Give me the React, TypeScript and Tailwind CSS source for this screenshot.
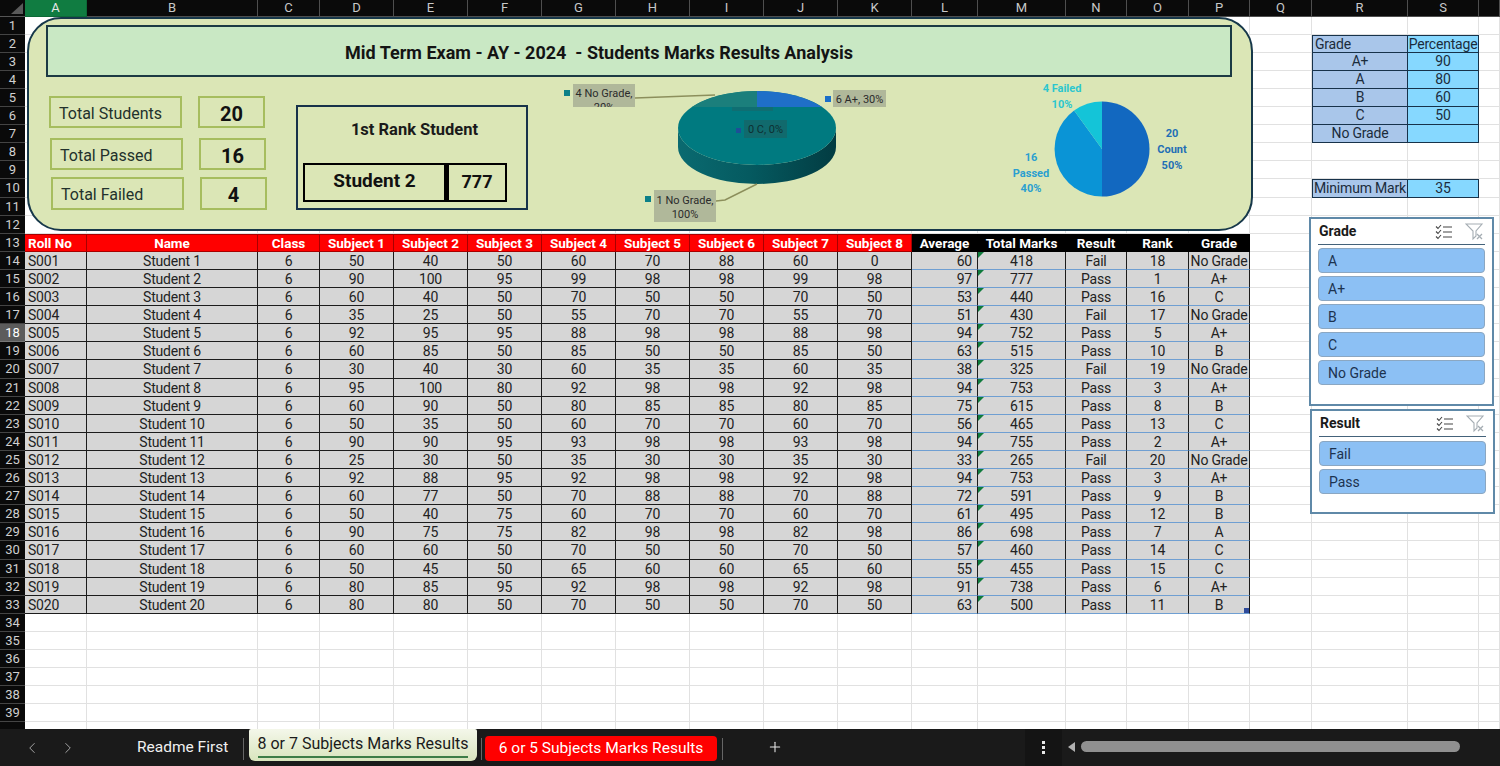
import React from "react";
import { ChevronLeft, ChevronRight, Plus } from "lucide-react";

const COLS = ["A","B","C","D","E","F","G","H","I","J","K","L","M","N","O","P","Q","R","S",""];
const HEAD = ["Roll No","Name","Class","Subject 1","Subject 2","Subject 3","Subject 4","Subject 5","Subject 6","Subject 7","Subject 8","Average","Total Marks","Result","Rank","Grade"];
const RAW = `50 40 50 60 70 88 60 0 60 418 Fail 18 No_Grade
90 100 95 99 98 98 99 98 97 777 Pass 1 A+
60 40 50 70 50 50 70 50 53 440 Pass 16 C
35 25 50 55 70 70 55 70 51 430 Fail 17 No_Grade
92 95 95 88 98 98 88 98 94 752 Pass 5 A+
60 85 50 85 50 50 85 50 63 515 Pass 10 B
30 40 30 60 35 35 60 35 38 325 Fail 19 No_Grade
95 100 80 92 98 98 92 98 94 753 Pass 3 A+
60 90 50 80 85 85 80 85 75 615 Pass 8 B
50 35 50 60 70 70 60 70 56 465 Pass 13 C
90 90 95 93 98 98 93 98 94 755 Pass 2 A+
25 30 50 35 30 30 35 30 33 265 Fail 20 No_Grade
92 88 95 92 98 98 92 98 94 753 Pass 3 A+
60 77 50 70 88 88 70 88 72 591 Pass 9 B
50 40 75 60 70 70 60 70 61 495 Pass 12 B
90 75 75 82 98 98 82 98 86 698 Pass 7 A
60 60 50 70 50 50 70 50 57 460 Pass 14 C
50 45 50 65 60 60 65 60 55 455 Pass 15 C
80 85 95 92 98 98 92 98 91 738 Pass 6 A+
80 80 50 70 50 50 70 50 63 500 Pass 11 B`;

const DATA = RAW.split("\n").map((line, i) => {
  const n = i + 1;
  return [`S${String(n).padStart(3, "0")}`, `Student ${n}`, "6", ...line.split(" ").map((v) => v.replace("_", " "))];
});

const SIDE: Record<number, [string, string]> = {
  2: ["Grade", "Percentage"],
  3: ["A+", "90"],
  4: ["A", "80"],
  5: ["B", "60"],
  6: ["C", "50"],
  7: ["No Grade", ""],
  10: ["Minimum Mark", "35"],
};

function Cell({ row, col }: { row: number; col: number }) {
  if (row >= 13 && row <= 33 && col <= 15) {
    if (row === 13) {
      const black = col >= 11;
      return (
        <div className={`flex items-center justify-center font-bold text-[13.5px] text-white border-t border-b border-r ${black ? "bg-black border-black" : "bg-[#ff0000] border-[#a80000]"} ${col === 0 ? "justify-start pl-[3px]" : ""}`}>
          {HEAD[col]}
        </div>
      );
    }
    const right = col >= 11;
    const value = DATA[row - 14][col];
    return (
      <div className={`relative flex items-center pt-[1px] bg-[#d6d6d6] text-[#222] text-[14px] tracking-[-0.2px] border-r border-r-[#1c1c1c] border-b ${right ? "border-b-[#6f9fd2]" : "border-b-[#1c1c1c]"} ${col === 0 ? "justify-start pl-[3px]" : col === 11 ? "justify-end pr-[5px]" : "justify-center"}`}>
        {value}
        {col === 12 && <span className="absolute left-0 top-0 w-[6px] h-[6px] bg-[#0f7b3c] [clip-path:polygon(0_0,100%_0,0_100%)]" />}
        {col === 15 && row === 33 && <span className="absolute right-0 bottom-0 w-[5px] h-[5px] bg-[#2f4b9b]" />}
      </div>
    );
  }
  if ((col === 17 || col === 18) && SIDE[row]) {
    const isR = col === 17;
    const [a, b] = SIDE[row];
    const first = row === 2 || row === 10;
    return (
      <div className={`flex items-center whitespace-nowrap text-[14px] tracking-[-0.2px] text-[#1b2c3c] border-r border-b border-[#17324a] ${first ? "border-t" : ""} ${isR ? "bg-[#a9c6ea] border-l" : "bg-[#86d8ff]"} ${row === 2 && isR ? "justify-start pl-[2px]" : "justify-center"}`}>
        {isR ? a : b}
      </div>
    );
  }
  return <div className="border-r border-b border-[#e1e1e1]" />;
}

function Stat({ label, value, left, top, h }: { label: string; value: string; left: string; top: string; h: string }) {
  return (
    <div className={`flex ${top} ${left}`}>
      <div className={`w-[133px] ${h} border-2 border-[#a6bd5e] flex items-center pl-[8px] pt-[3px] text-[16px] text-[#22312c]`}>{label}</div>
      <div className={`w-[67px] ${h} ml-[16px] border-2 border-[#a6bd5e] flex items-center justify-center pt-[3px] text-[20px] font-bold text-[#111]`}>{value}</div>
    </div>
  );
}

function MultiSelectIcon() {
  return (
    <svg width="18" height="16" viewBox="0 0 18 16" fill="none" stroke="#444" strokeWidth="1.1">
      <path d="M1 2.5l2 2 3-3.5M1 7.5l2 2 3-3.5M1 12.5l2 2 3-3.5" />
      <path d="M8 3h9M8 8h9M8 13h9" />
    </svg>
  );
}

function ClearFilterIcon() {
  return (
    <svg width="19" height="18" viewBox="0 0 19 18" fill="none" stroke="#a5adb3" strokeWidth="1.1">
      <path d="M1 1h16l-6 7v5l-3 3V8z" />
      <path d="M12 11l5 5M17 11l-5 5" strokeWidth="1.3" />
    </svg>
  );
}

function Slicer({ title, items, className, listGap }: { title: string; items: string[]; className: string; listGap: string }) {
  return (
    <div className={`absolute bg-white border-2 border-[#5f89a8] px-[7px] ${className}`}>
      <div className="flex items-center h-[26px] pl-[1px] border-b border-[#44627a] text-[#1a1a1a]">
        <span className="font-bold text-[14px] flex-1">{title}</span>
        <span className="mr-[12px]"><MultiSelectIcon /></span>
        <span className="mr-[1px]"><ClearFilterIcon /></span>
      </div>
      <div className={`flex flex-col gap-[3px] ${listGap}`}>
        {items.map((t) => (
          <div key={t} className="h-[25px] rounded-[4px] bg-[#8cc0f4] border border-[#8ba7c2] flex items-center pl-[9px] pt-[1px] text-[14px] text-[#1c3350]">{t}</div>
        ))}
      </div>
    </div>
  );
}

function Charts() {
  return (
    <svg width="655" height="153" viewBox="555 78 655 153">
      <defs>
        <linearGradient id="side" x1="0" x2="1" y1="0" y2="0">
          <stop offset="0" stopColor="#0a6a70" />
          <stop offset="0.45" stopColor="#055a60" />
          <stop offset="1" stopColor="#023c42" />
        </linearGradient>
        <clipPath id="clipLabel"><rect x="573" y="84" width="62" height="23" /></clipPath>
      </defs>
      <path d="M678,128 A79,37 0 0 0 836,128 L836,147 A79,37 0 0 1 678,147 Z" fill="url(#side)" />
      <ellipse cx="757" cy="128" rx="79" ry="37" fill="#007a80" />
      <path d="M757,107 L757,91 A79,37 0 0 1 822,107 Z" fill="#1f6fc8" />
      <path d="M757,107 L757,91 A79,37 0 0 0 692,107 Z" fill="#1b7f7c" />
      <rect x="732" y="107" width="41" height="4" fill="#0f6e72" />

      <path d="M635,98 L715,95" stroke="#8c8f5c" strokeWidth="1.5" fill="none" />
      <path d="M716,201 L725,200 L757,184" stroke="#8c8f5c" strokeWidth="1.5" fill="none" />

      <rect x="564" y="90" width="6" height="6" fill="#0b8088" />
      <rect x="573" y="84" width="62" height="23" fill="#b0b89a" />
      <g clipPath="url(#clipLabel)" fontSize="11" fill="#2b2b2b" textAnchor="middle">
        <text x="604" y="97">4 No Grade,</text>
        <text x="604" y="111">20%</text>
      </g>

      <rect x="825" y="96" width="6" height="6" fill="#1a6fc8" />
      <rect x="833" y="90" width="53" height="17" fill="#b0b89a" />
      <text x="859.5" y="103" fontSize="11" fill="#2b2b2b" textAnchor="middle">6 A+, 30%</text>

      <rect x="736" y="128" width="5" height="5" fill="#1d4f97" />
      <rect x="744" y="120" width="43" height="18" fill="#116a6d" />
      <text x="765.5" y="133" fontSize="11" fill="#0e3032" textAnchor="middle">0 C, 0%</text>

      <rect x="645" y="196" width="6" height="6" fill="#0b8088" />
      <rect x="654" y="190" width="62" height="32" fill="#b0b89a" />
      <g fontSize="11" fill="#2b2b2b" textAnchor="middle">
        <text x="685" y="204">1 No Grade,</text>
        <text x="685" y="218">100%</text>
      </g>

      <path d="M1102,149 L1102,101.5 A47.5,47.5 0 0 1 1102,196.5 Z" fill="#1268c0" />
      <path d="M1102,149 L1102,196.5 A47.5,47.5 0 0 1 1074.1,110.6 Z" fill="#0a94d6" />
      <path d="M1102,149 L1074.1,110.6 A47.5,47.5 0 0 1 1102,101.5 Z" fill="#14c4d8" />

      <g fontSize="11" fontWeight="700" textAnchor="middle">
        <g fill="#2cc6cf">
          <text x="1062" y="92">4 Failed</text>
          <text x="1062" y="108">10%</text>
        </g>
        <g fill="#1f6fb5">
          <text x="1172" y="137">20</text>
          <text x="1172" y="153">Count</text>
          <text x="1172" y="169">50%</text>
        </g>
        <g fill="#2a9fd0">
          <text x="1031" y="161">16</text>
          <text x="1031" y="177">Passed</text>
          <text x="1031" y="192">40%</text>
        </g>
      </g>
    </svg>
  );
}

export default function App() {
  const rows = Array.from({ length: 40 }, (_, i) => i + 1);
  return (
    <div className="w-[1500px] h-[766px] overflow-hidden bg-white flex flex-col font-[family-name:Roboto,sans-serif]">
      <div className="relative h-[729px] overflow-hidden">
        <div className="grid grid-cols-[25px_62px_171px_62px_repeat(8,74px)_66px_88px_61px_62px_61px_62px_96px_71px_21px] grid-rows-[17px_repeat(9,18px)_19px_repeat(9,18px)_19px_repeat(9,18px)_19px_repeat(10,18px)]">
          <div className="bg-[#0a0a0a] relative border-b border-[#555]">
            <span className="absolute right-[2px] bottom-[2px] w-[12px] h-[11px] bg-[#5a5a5a] [clip-path:polygon(100%_0,100%_100%,0_100%)]" />
          </div>
          {COLS.map((c, i) => (
            <div key={i} className={`flex items-center justify-center text-[13px] border-r border-b ${c === "A" ? "bg-[#107c41] text-[#e6e6e6] border-[#0d6a37]" : "bg-[#0a0a0a] text-[#c8c8c8] border-[#4e4e4e]"}`}>{c}</div>
          ))}
          {rows.map((r) => (
            <React.Fragment key={r}>
              <div className={`flex items-center justify-center text-[13px] border-b ${r === 18 ? "bg-[#5c5c5c] text-white border-[#777]" : "bg-[#0a0a0a] text-[#d0d0d0] border-[#444]"}`}>{r < 40 ? r : ""}</div>
              {COLS.map((_, c) => <Cell key={c} row={r} col={c} />)}
            </React.Fragment>
          ))}
        </div>

        <div className="absolute left-[27px] top-[17px] w-[1226px] h-[214px] rounded-[34px] border-2 border-[#17384a] bg-[#dbe6b6] pt-[6px]">
          <div className="ml-[17px] w-[1186px] h-[52px] border-2 border-[#1c3a44] bg-[#c9e8c4] flex items-center justify-center pr-[80px] pt-[2px] font-bold text-[18px] text-[#141414] whitespace-pre">
            Mid Term Exam - AY - 2024  - Students Marks Results Analysis
          </div>
          <div className="flex">
            <div className="w-[267px] pl-[20px]">
              <Stat label="Total Students" value="20" left="" top="mt-[19px]" h="h-[32px]" />
              <Stat label="Total Passed" value="16" left="ml-[1px]" top="mt-[10px]" h="h-[32px]" />
              <Stat label="Total Failed" value="4" left="ml-[2px]" top="mt-[7px]" h="h-[33px]" />
            </div>
            <div className="mt-[28px] w-[232px] h-[105px] border-2 border-[#17324a] px-[5px]">
              <div className="h-[56px] flex items-center justify-center font-bold text-[16.5px] text-[#1a1a1a] pb-[10px] pl-[5px]">1st Rank Student</div>
              <div className="flex h-[39px] font-bold text-[#111]">
                <div className="w-[143px] border-2 border-black flex items-center justify-center pb-[2px] text-[19px]">Student 2</div>
                <div className="w-[61px] border-2 border-l-[3px] border-black flex items-center justify-center pb-[2px] text-[18px]">777</div>
              </div>
            </div>
            <div className="ml-[27px] mt-[1px]"><Charts /></div>
          </div>
        </div>

        <Slicer title="Grade" items={["A", "A+", "B", "C", "No Grade"]} listGap="mt-[3px]" className="left-[1309px] top-[217px] w-[185px] h-[189px]" />
        <Slicer title="Result" items={["Fail", "Pass"]} listGap="mt-[4px]" className="left-[1310px] top-[409px] w-[185px] h-[105px]" />
      </div>

      <div className="flex-1 bg-[#1a1a1a] flex items-start relative">
        <div className="flex items-center w-[137px] h-[37px] text-[#a6a6a6]">
          <ChevronLeft size={18} strokeWidth={1.3} className="ml-[23px]" />
          <ChevronRight size={18} strokeWidth={1.3} className="ml-[18px]" />
        </div>
        <div className="h-[37px] flex items-center text-[15.5px] text-[#f0f0f0] w-[106px]">Readme First</div>
        <div className="w-[1px] h-[22px] mt-[9px] bg-[#666]" />
        <div className="ml-[5px] w-[228px] h-[32px] rounded-b-[6px] rounded-t-[2px] bg-gradient-to-b from-[#f4f7ea] to-[#d9e5bd] flex flex-col items-center pt-[3px] text-[16px] text-[#1a1a1a]">
          <span className="h-[24px] leading-[24px]">8 or 7 Subjects Marks Results</span>
          <span className="w-[210px] h-[2px] bg-[#3d7d47]" />
        </div>
        <div className="ml-[4px] w-[1px] h-[22px] mt-[9px] bg-[#666]" />
        <div className="ml-[3px] mt-[7px] w-[232px] h-[25px] rounded-[4px] bg-[#ff0000] flex items-center justify-center text-[15.5px] text-white">6 or 5 Subjects Marks Results</div>
        <div className="ml-[5px] w-[1px] h-[22px] mt-[9px] bg-[#666]" />
        <div className="ml-[44px] mt-[10px] text-[#e8e8e8]"><Plus size={16} strokeWidth={1.6} /></div>
        <div className="ml-[242px] w-[37px] h-[37px] bg-[#141414] flex flex-col items-center justify-center gap-[2px]">
          <span className="w-[3px] h-[3px] bg-[#e8e8e8]" />
          <span className="w-[3px] h-[3px] bg-[#e8e8e8]" />
          <span className="w-[3px] h-[3px] bg-[#e8e8e8]" />
        </div>
        <div className="ml-[6px] mt-[13px] w-[7px] h-[10px] bg-[#b0b0b0] [clip-path:polygon(100%_0,100%_100%,0_50%)]" />
        <div className="ml-[6px] mt-[12px] w-[379px] h-[11px] rounded-full bg-[#909090]" />
      </div>
    </div>
  );
}
